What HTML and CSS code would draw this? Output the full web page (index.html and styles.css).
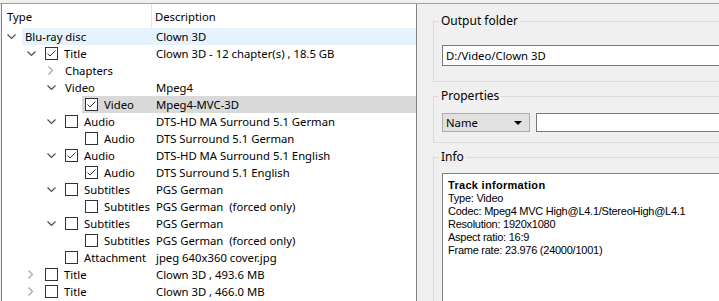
FILE: index.html
```html
<!doctype html>
<html>
	<head>
		<title>Blu-ray tracks</title>
		<link rel="stylesheet" href="styles.css">
	</head>
	<body>
		<div class="app">

			<div class="tree">
				<div class="tree-head">
					<div class="head-type">Type</div>
					<div class="head-desc">Description</div>
				</div>

				<div class="row l0 hover">
					<span class="chev down"><svg width="9" height="6" viewBox="0 0 9 6"><polyline points="0.5,0.5 4.5,4.5 8.5,0.5"/></svg></span>
					<div class="line">
						<span class="name">Blu-ray disc</span>
						<span class="desc">Clown 3D</span>
					</div>
				</div>
				<div class="row l1">
					<span class="chev down"><svg width="9" height="6" viewBox="0 0 9 6"><polyline points="0.5,0.5 4.5,4.5 8.5,0.5"/></svg></span>
					<div class="line">
						<span class="name"><span class="box checked"><svg width="11" height="11" viewBox="0 0 11 11"><polyline points="1.5,5.5 4,8 9.5,2.5"/></svg></span>Title</span>
						<span class="desc">Clown 3D - 12 chapter(s) , 18.5 GB</span>
					</div>
				</div>
				<div class="row l2">
					<span class="chev right"><svg width="6" height="9" viewBox="0 0 6 9"><polyline points="0.5,0.5 4.5,4.5 0.5,8.5"/></svg></span>
					<div class="line">
						<span class="name">Chapters</span>
						<span class="desc"></span>
					</div>
				</div>
				<div class="row l2">
					<span class="chev down"><svg width="9" height="6" viewBox="0 0 9 6"><polyline points="0.5,0.5 4.5,4.5 8.5,0.5"/></svg></span>
					<div class="line">
						<span class="name">Video</span>
						<span class="desc">Mpeg4</span>
					</div>
				</div>
				<div class="row l3 selected">
					<span class="chev"></span>
					<div class="line">
						<span class="name"><span class="box checked"><svg width="11" height="11" viewBox="0 0 11 11"><polyline points="1.5,5.5 4,8 9.5,2.5"/></svg></span>Video</span>
						<span class="desc">Mpeg4-MVC-3D</span>
					</div>
				</div>
				<div class="row l2">
					<span class="chev down"><svg width="9" height="6" viewBox="0 0 9 6"><polyline points="0.5,0.5 4.5,4.5 8.5,0.5"/></svg></span>
					<div class="line">
						<span class="name"><span class="box"></span>Audio</span>
						<span class="desc">DTS-HD MA Surround 5.1 German</span>
					</div>
				</div>
				<div class="row l3">
					<span class="chev"></span>
					<div class="line">
						<span class="name"><span class="box"></span>Audio</span>
						<span class="desc">DTS Surround 5.1 German</span>
					</div>
				</div>
				<div class="row l2">
					<span class="chev down"><svg width="9" height="6" viewBox="0 0 9 6"><polyline points="0.5,0.5 4.5,4.5 8.5,0.5"/></svg></span>
					<div class="line">
						<span class="name"><span class="box checked"><svg width="11" height="11" viewBox="0 0 11 11"><polyline points="1.5,5.5 4,8 9.5,2.5"/></svg></span>Audio</span>
						<span class="desc">DTS-HD MA Surround 5.1 English</span>
					</div>
				</div>
				<div class="row l3">
					<span class="chev"></span>
					<div class="line">
						<span class="name"><span class="box checked"><svg width="11" height="11" viewBox="0 0 11 11"><polyline points="1.5,5.5 4,8 9.5,2.5"/></svg></span>Audio</span>
						<span class="desc">DTS Surround 5.1 English</span>
					</div>
				</div>
				<div class="row l2">
					<span class="chev down"><svg width="9" height="6" viewBox="0 0 9 6"><polyline points="0.5,0.5 4.5,4.5 8.5,0.5"/></svg></span>
					<div class="line">
						<span class="name"><span class="box"></span>Subtitles</span>
						<span class="desc">PGS German</span>
					</div>
				</div>
				<div class="row l3">
					<span class="chev"></span>
					<div class="line">
						<span class="name"><span class="box"></span>Subtitles</span>
						<span class="desc">PGS German  (forced only)</span>
					</div>
				</div>
				<div class="row l2">
					<span class="chev down"><svg width="9" height="6" viewBox="0 0 9 6"><polyline points="0.5,0.5 4.5,4.5 8.5,0.5"/></svg></span>
					<div class="line">
						<span class="name"><span class="box"></span>Subtitles</span>
						<span class="desc">PGS German</span>
					</div>
				</div>
				<div class="row l3">
					<span class="chev"></span>
					<div class="line">
						<span class="name"><span class="box"></span>Subtitles</span>
						<span class="desc">PGS German  (forced only)</span>
					</div>
				</div>
				<div class="row l2">
					<span class="chev"></span>
					<div class="line">
						<span class="name"><span class="box"></span>Attachment</span>
						<span class="desc">jpeg 640x360 cover.jpg</span>
					</div>
				</div>
				<div class="row l1">
					<span class="chev right"><svg width="6" height="9" viewBox="0 0 6 9"><polyline points="0.5,0.5 4.5,4.5 0.5,8.5"/></svg></span>
					<div class="line">
						<span class="name"><span class="box"></span>Title</span>
						<span class="desc">Clown 3D , 493.6 MB</span>
					</div>
				</div>
				<div class="row l1">
					<span class="chev right"><svg width="6" height="9" viewBox="0 0 6 9"><polyline points="0.5,0.5 4.5,4.5 0.5,8.5"/></svg></span>
					<div class="line">
						<span class="name"><span class="box"></span>Title</span>
						<span class="desc">Clown 3D , 466.0 MB</span>
					</div>
				</div>
			</div>

			<div class="side">
				<fieldset class="group group-output">
					<legend>Output folder</legend>
					<input class="field" type="text" value="D:/Video/Clown 3D" />
				</fieldset>

				<fieldset class="group group-props">
					<legend>Properties</legend>
					<div class="props">
						<div class="combo">Name<span class="arrow"></span></div>
						<input class="field field-small" type="text" value="" />
					</div>
				</fieldset>

				<fieldset class="group group-info">
					<legend>Info</legend>
					<div class="info">
						<strong>Track information</strong>
						<div>Type: Video</div>
						<div>Codec: Mpeg4 MVC High@L4.1/StereoHigh@L4.1</div>
						<div>Resolution: 1920x1080</div>
						<div>Aspect ratio: 16:9</div>
						<div>Frame rate: 23.976 (24000/1001)</div>
					</div>
				</fieldset>
			</div>

		</div>
	</body>
</html>
```

FILE: styles.css
```css
* {
	margin: 0;
	padding: 0;
	box-sizing: border-box;
}

html,
body {
	height: 100%;
	overflow: hidden;
}

body {
	background: #f0f0f0;
	font-family: "Noto Sans", "Open Sans", sans-serif;
	font-size: 11.3px;
	color: #000;
}

.app {
	display: flex;
	margin-top: 3px;
	border-top: 1px solid #a0a0a0;
	height: 298px;
	overflow: hidden;
}

/* tree */

.tree {
	flex: 0 0 416px;
	margin-left: 1px;
	background: #fff;
	border-left: 1px solid #828282;
	border-right: 1px solid #828282;
}

.tree-head {
	display: flex;
	height: 24px;
	align-items: stretch;
}
	.tree-head > div {
		display: flex;
		align-items: center;
		padding-top: 1px;
	}
	.head-type {
		width: 150px;
		padding-left: 5px;
		border-right: 1px solid #e5e5e5;
	}
	.head-desc {
		padding-left: 3px;
	}

.row {
	display: flex;
	height: 17px;
	align-items: stretch;
	white-space: pre;
}
.row.l1 { padding-left: 20px; }
.row.l2 { padding-left: 40px; }
.row.l3 { padding-left: 60px; }

	.chev {
		flex: 0 0 20px;
		display: flex;
		align-items: center;
		justify-content: center;
		padding-right: 2px;
	}
	.chev polyline {
		fill: none;
		stroke-width: 1.2;
	}
	.chev.down polyline {
		stroke: #4d4d4d;
	}
	.chev.right polyline {
		stroke: #a6a6a6;
	}

	.line {
		flex: 1;
		display: flex;
		align-items: center;
	}
	.hover .line {
		background: #e5f3ff;
	}
	.selected .line {
		background: #d9d9d9;
	}

	.name {
		display: flex;
		align-items: center;
		width: 134px;
		padding-left: 3px;
	}
	.l1 .name { width: 114px; }
	.l2 .name { width: 94px; }
	.l3 .name { width: 74px; }

	.box {
		flex: 0 0 13px;
		height: 13px;
		margin-right: 6px;
		border: 1px solid #333;
		background: #fff;
		display: flex;
		align-items: center;
		justify-content: center;
	}
	.box polyline {
		fill: none;
		stroke: #333;
		stroke-width: 1;
	}

/* right side */

.side {
	flex: 0 0 360px;
	padding: 10px 0 0 16px;
}

.group {
	border: 1px solid #dcdcdc;
	padding: 0 8px;
	margin-right: -40px;
}
	.group legend {
		margin-left: -3px;
		padding: 0 2px;
		line-height: 14px;
		font-size: 12px;
	}

.group-output {
	padding-top: 17px;
	padding-bottom: 15px;
}
.group-props {
	margin-top: 7px;
	padding-top: 10px;
	padding-bottom: 10px;
}
.group-info {
	margin-top: 7px;
	padding-top: 9px;
	height: 160px;
}

.field {
	display: block;
	width: 100%;
	height: 21px;
	border: 1px solid #7a7a7a;
	background: #fff;
	font: inherit;
	padding: 0 3px;
	color: #000;
	outline: none;
}

.props {
	display: flex;
	gap: 6px;
}
	.combo {
		position: relative;
		flex: 0 0 88px;
		height: 19px;
		border: 1px solid #adadad;
		background: #e1e1e1;
		padding-left: 3px;
		line-height: 17px;
	}
	.combo .arrow {
		position: absolute;
		right: 7px;
		top: 7px;
		border-left: 4px solid transparent;
		border-right: 4px solid transparent;
		border-top: 4px solid #000;
	}
	.field-small {
		flex: 1;
		height: 19px;
	}

.info {
	height: 140px;
	border: 1px solid #828282;
	background: #fff;
	padding: 5px 5px;
	font-family: "Liberation Sans", Arial, sans-serif;
	font-size: 11px;
	line-height: 13px;
	letter-spacing: -0.25px;
}
	.info strong {
		display: block;
		letter-spacing: 0.3px;
	}
```
